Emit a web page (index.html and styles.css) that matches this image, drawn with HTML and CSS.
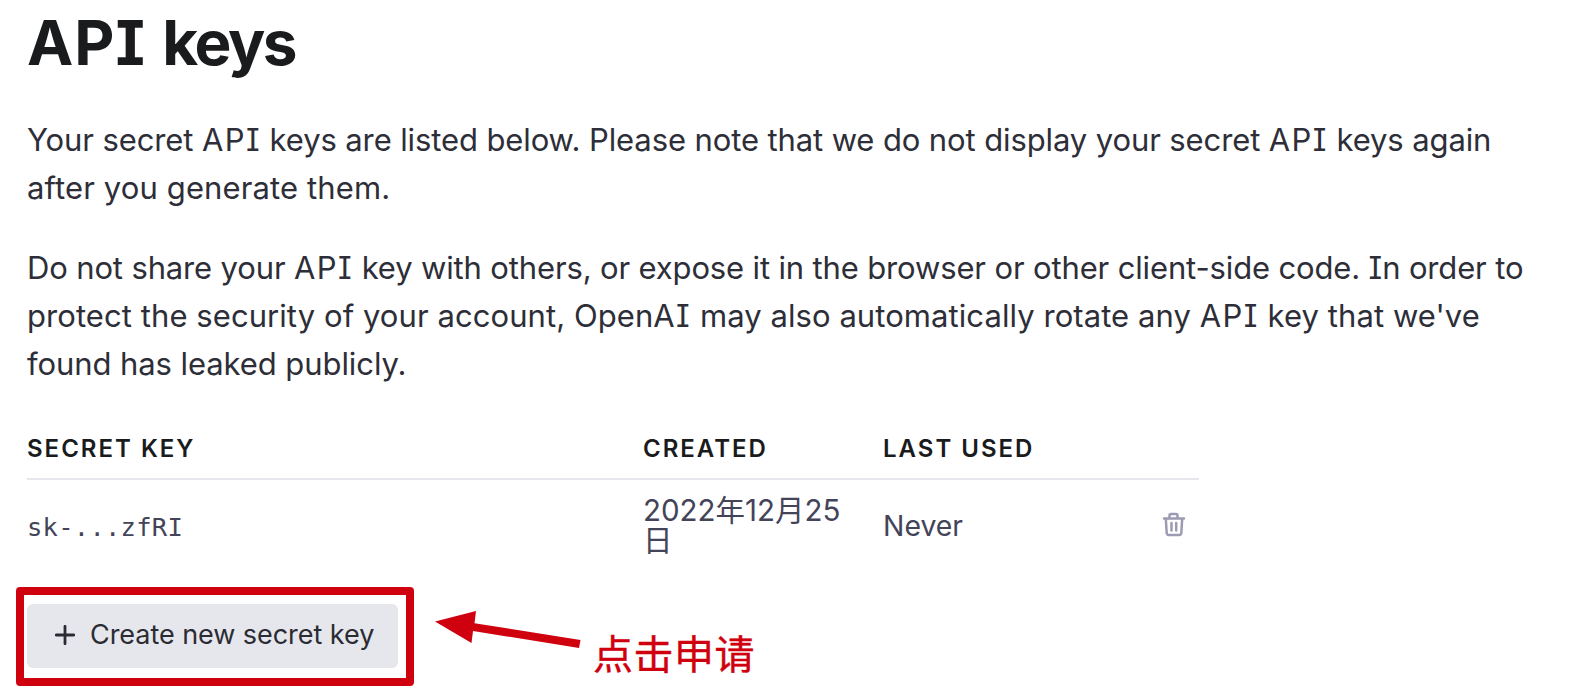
FILE: index.html
```html
<!DOCTYPE html>
<html lang="en">
<head>
<meta charset="utf-8">
<title>API keys</title>
<link rel="stylesheet" href="styles.css">
</head>
<body>
<main class="page">
  <h1 class="title"><span class="title-api">API</span> keys</h1>
  <p class="copy"><span class="line l1">Your secret <span class="caps">API</span> keys are listed below. Please note that we do not display your secret <span class="caps">API</span> keys again</span> <span class="line l2">after you generate them.</span></p>
  <p class="copy"><span class="line l3">Do not share your <span class="caps">API</span> key with others, or expose it in the browser or other client-side code. In order to</span> <span class="line l4">protect the security of your account, Open<span class="caps">AI</span> may also automatically rotate any <span class="caps">API</span> key that we've</span> <span class="line l5">found has leaked publicly.</span></p>
  <div class="keys">
    <div class="row head">
      <span class="h-key">Secret key</span><span class="h-created">Created</span><span class="h-used">Last used</span><span></span>
    </div>
    <div class="row item">
      <code class="key">sk-...zfRI</code>
      <span class="date">2022年12月25日</span>
      <span class="used">Never</span>
      <svg class="trash" width="24" height="26" viewBox="0 0 24 26" fill="none" stroke="#9c9bb3" stroke-width="2.500" stroke-linejoin="round" stroke-linecap="round">
        <path d="M2 6.5H22M7.500 6V3.500Q7.500 2 9 2H14Q15.500 2 15.500 3.500V6M3.800 6.500L4.700 21Q4.900 23 6.800 23H17.200Q19.100 23 19.300 21L20.200 6.500M9.500 11V18.500M14.200 11V18.500"/>
      </svg>
    </div>
  </div>
  <div class="actions">
    <div class="highlight">
      <button class="create" type="button">
        <svg width="20" height="20" viewBox="0 0 20 20" stroke="#2b2c33" stroke-width="2.800" stroke-linecap="round"><path d="M10 1.300V18.700M1.300 10H18.700"/></svg>
        <span>Create new secret key</span>
      </button>
    </div>
    <svg class="arrow" width="146" height="34" viewBox="0 0 146 34" fill="#d0010f"><path d="M0 10.500L41 0L39.500 12.200L145.500 29L144 37L38 20L36.500 32Z"/></svg>
    <span class="note">点击申请</span>
  </div>
</main>
</body>
</html>
```
FILE: styles.css
```css
* { box-sizing: border-box; }
body { margin: 0; background: #fff; overflow: hidden; }
.page {
  width: 1570px;
  height: 694px;
  padding: 8px 27px 0;
  font-family: Inter, "Noto Sans CJK SC", sans-serif;
  font-feature-settings: "cv08" 1;
  color: #2d2e38;
}
.title {
  margin: 0 0 34px;
  height: 74px;
  line-height: 70px;
  font-size: 62px;
  font-weight: 700;
  letter-spacing: -2.4px;
  word-spacing: 4px;
  color: #1a1b1d;
}
.title-api { letter-spacing: 1px; }
.copy { margin: 0 0 32px; font-size: 31px; line-height: 48px; }
.line { display: block; white-space: nowrap; }
.caps { letter-spacing: 1.4px; }
.l1 { letter-spacing: -.11px; }
.l2 { letter-spacing: .12px; }
.l3 { letter-spacing: -.145px; }
.l4 { letter-spacing: .07px; }
.l5 { letter-spacing: -.08px; }
.keys { width: 1172px; color: #444459; }
.row { display: grid; grid-template-columns: 616px 240px 278px 37px; align-items: center; }
.head {
  height: 60px;
  border-bottom: 2px solid #e6e6ed;
  font-size: 24px;
  line-height: 56px;
  padding-bottom: 1px;
  font-weight: 600;
  letter-spacing: 2px;
  text-transform: uppercase;
  color: #1a1b1d;
}
.item { height: 90px; font-size: 28.4px; }
.key { font-family: "DejaVu Sans Mono", monospace; font-size: 25.5px; letter-spacing: .25px; padding-top: 4px; }
.date { width: 208px; font-size: 29.5px; line-height: 30px; word-break: break-all; }
.trash { margin-left: 1px; }
.actions { display: flex; align-items: flex-start; margin: 17px 0 0 -11px; }
.highlight { width: 398px; height: 99px; padding: 9px 4px; border: 8px solid #d0010f; border-radius: 4px; }
.create {
  display: flex;
  align-items: center;
  gap: 15px;
  width: 371px;
  height: 64px;
  padding: 0 0 3px 28px;
  margin: 0 -1px;
  border: 0;
  border-radius: 6px;
  background: #e6e7ec;
  font: 27px Inter, sans-serif;
  letter-spacing: -.05px;
  color: #2b2c33;
  white-space: nowrap;
}
.arrow { margin: 24px 0 0 21px; overflow: visible; }
.note { margin: 36px 0 0 12px; font: 40px/58px "Noto Sans CJK SC", sans-serif; letter-spacing: .5px; -webkit-text-stroke: .4px #d0010f; color: #d0010f; }
```
